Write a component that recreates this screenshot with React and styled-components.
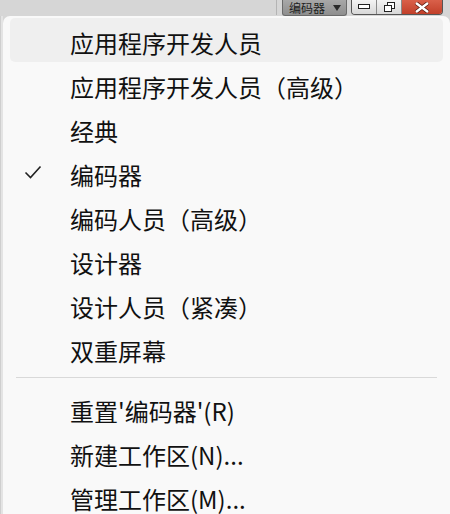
import React from 'react';
import styled, { createGlobalStyle } from 'styled-components';

const GlobalStyle = createGlobalStyle`
  html, body {
    margin: 0;
    padding: 0;
    background: #d6d6d6;
  }
  body {
    width: 450px;
    height: 514px;
    overflow: hidden;
    font-family: "Noto Sans CJK SC", "Noto Sans", sans-serif;
  }
`;

const Page = styled.div`
  width: 450px;
  height: 514px;
  display: flex;
  flex-direction: column;
  background: #d6d6d6;
`;

const TopBar = styled.div`
  height: 18px;
  display: flex;
  align-items: flex-start;
  justify-content: flex-end;
  padding-right: 7px;
`;

const Divider = styled.div`
  width: 1px;
  height: 15px;
  background: #b4b4b4;
  margin-right: 5px;
`;

const WorkspaceButton = styled.div`
  width: 52px;
  height: 15px;
  border: 1px solid #6b6b6b;
  border-top: none;
  border-radius: 0 0 3px 3px;
  background: linear-gradient(#a8a8a8, #8e8e8e);
  display: flex;
  align-items: center;
  justify-content: space-between;
  padding: 0 5px 0 6px;
  font-size: 12px;
  line-height: 13px;
  color: #1e1e1e;
  margin-right: 4px;
`;

const Caret = styled.span`
  width: 0;
  height: 0;
  border-left: 4px solid transparent;
  border-right: 4px solid transparent;
  border-top: 6px solid #2a2a2a;
`;

const WindowButtons = styled.div`
  display: flex;
  height: 14px;
  border: 1px solid #555;
  border-top: none;
  border-radius: 0 0 4px 4px;
  overflow: hidden;
`;

const WinBtn = styled.div`
  width: ${({ wide }) => (wide ? '40px' : '24px')};
  height: 14px;
  display: flex;
  align-items: center;
  justify-content: center;
  background: ${({ danger }) =>
    danger ? 'linear-gradient(#d9604a, #c2402a)' : 'linear-gradient(#f4f4f4, #d8d8d8)'};
  border-left: ${({ first }) => (first ? 'none' : '1px solid #8a8a8a')};
`;

const Body = styled.div`
  flex: 1;
  display: flex;
`;

const LeftStrip = styled.div`
  width: 3px;
  background: #e4e4e4;
  border-left: 1px solid #cfcfcf;
  box-sizing: border-box;
`;

const Menu = styled.div`
  flex: 1;
  background: #f9f9f9;
  border-radius: 7px 7px 0 0;
  padding: 2px 7px 0 7px;
  display: flex;
  flex-direction: column;
`;

const Item = styled.div`
  height: 44px;
  flex-shrink: 0;
  display: flex;
  align-items: center;
  border-radius: 5px;
  background: ${({ hover }) => (hover ? '#efefef' : 'transparent')};
  font-size: 24px;
  color: #111;
  white-space: nowrap;
`;

const Label = styled.span`
  position: relative;
  top: 2px;
`;

const CheckCell = styled.div`
  width: 60px;
  display: flex;
  justify-content: flex-start;
  padding-left: 14px;
  box-sizing: border-box;
`;

const Separator = styled.div`
  height: 1px;
  flex-shrink: 0;
  background: #d9d9d9;
  margin: 7px 6px 8px 6px;
`;

const Check = () => (
  <svg width="18" height="14" viewBox="0 0 18 14">
    <path d="M1.5 7.5 L6.5 12.5 L16.5 1.5" fill="none" stroke="#222" strokeWidth="1.6" />
  </svg>
);

const items = [
  { label: '应用程序开发人员', hover: true },
  { label: '应用程序开发人员（高级）' },
  { label: '经典' },
  { label: '编码器', checked: true },
  { label: '编码人员（高级）' },
  { label: '设计器' },
  { label: '设计人员（紧凑）' },
  { label: '双重屏幕' },
];

const actions = ["重置'编码器'(R)", '新建工作区(N)...', '管理工作区(M)...'];

export default function App() {
  return (
    <Page>
      <GlobalStyle />
      <TopBar>
        <Divider />
        <WorkspaceButton>
          编码器
          <Caret />
        </WorkspaceButton>
        <WindowButtons>
          <WinBtn first>
            <svg width="12" height="6" viewBox="0 0 12 6">
              <rect x="0.5" y="0.5" width="11" height="4" fill="#fff" stroke="#222" />
            </svg>
          </WinBtn>
          <WinBtn>
            <svg width="11" height="10" viewBox="0 0 11 10">
              <rect x="3.5" y="0.5" width="7" height="6" fill="#fff" stroke="#222" />
              <rect x="0.5" y="3.5" width="7" height="6" fill="#fff" stroke="#222" />
            </svg>
          </WinBtn>
          <WinBtn wide danger>
            <svg width="16" height="11" viewBox="0 0 16 11">
              <path d="M2 1 L14 10 M14 1 L2 10" stroke="#5a1a10" strokeWidth="4" />
              <path d="M2 1 L14 10 M14 1 L2 10" stroke="#fff" strokeWidth="2.4" />
            </svg>
          </WinBtn>
        </WindowButtons>
      </TopBar>
      <Body>
        <LeftStrip />
        <Menu>
          {items.map((it) => (
            <Item key={it.label} hover={it.hover}>
              <CheckCell>{it.checked && <Check />}</CheckCell>
              <Label>{it.label}</Label>
            </Item>
          ))}
          <Separator />
          {actions.map((a) => (
            <Item key={a}>
              <CheckCell />
              <Label>{a}</Label>
            </Item>
          ))}
        </Menu>
      </Body>
    </Page>
  );
}
